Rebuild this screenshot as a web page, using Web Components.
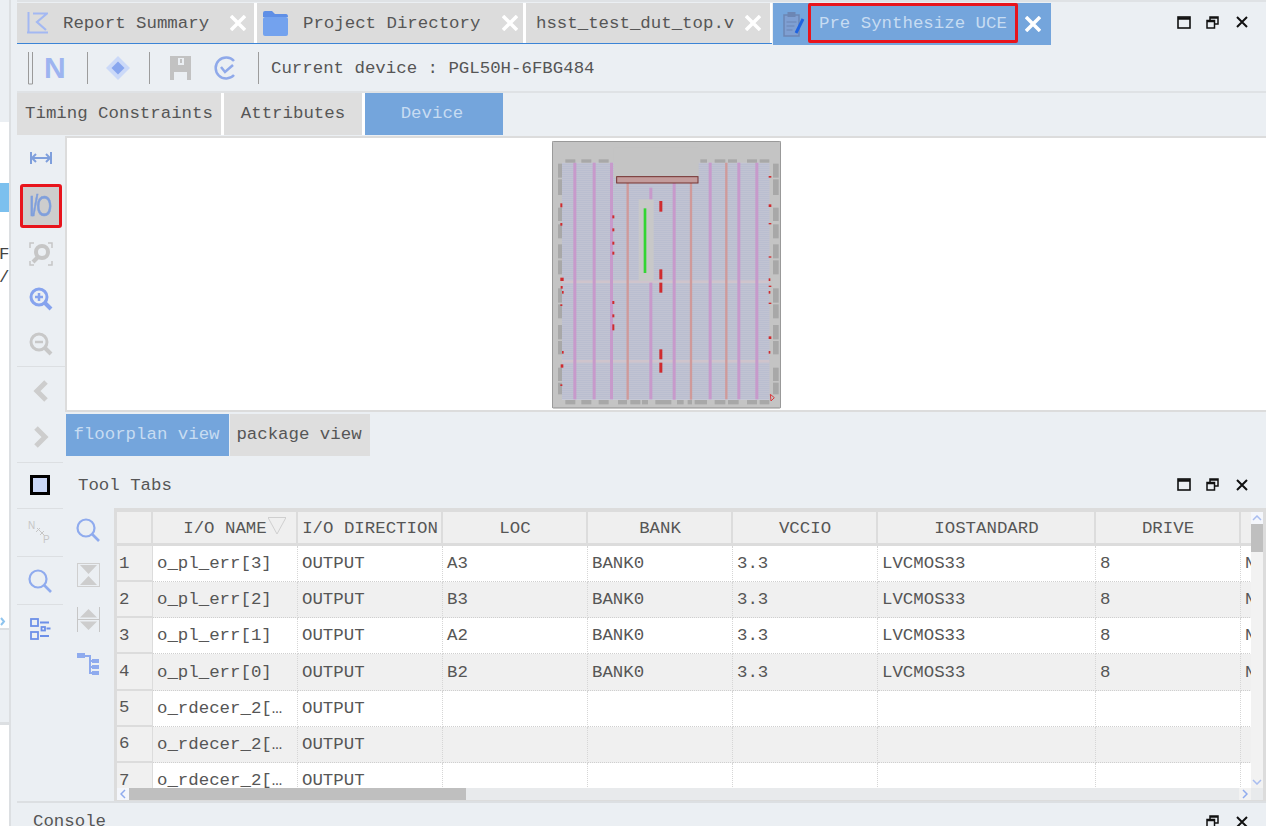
<!DOCTYPE html>
<html>
<head>
<meta charset="utf-8">
<title>Pre Synthesize UCE</title>
<style>
  html, body { margin: 0; height: 826px; overflow: hidden; background: #ebeff3; }
  body { font: 17.4px "Liberation Mono", monospace; color: #565656; display: flex; }
</style>
</head>
<body>
<left-sliver></left-sliver>
<ide-main>
  <tab-strip>
    <doc-tab icon="report" width="237" pad="10" gap="15" closer="8" text="Report Summary"></doc-tab>
    <doc-tab icon="folder" width="266" pad="6" gap="15" closer="5" text="Project Directory"></doc-tab>
    <doc-tab width="244" pad="10" gap="0" closer="9" text="hsst_test_dut_top.v"></doc-tab>
    <doc-tab icon="clip" width="278" pad="10" gap="3" closer="10" text="Pre Synthesize UCE" active marked></doc-tab>
  </tab-strip>
  <top-toolbar></top-toolbar>
  <sub-tabs></sub-tabs>
  <device-panel></device-panel>
  <panel-title></panel-title>
  <tool-panel></tool-panel>
  <console-title></console-title>
</ide-main>
<script>
const ICONS = {
  report: `<svg width="21" height="22" viewBox="0 0 21 22" fill="none" stroke="#a3b8f2" stroke-width="2"><path d="M1.500 0v21M0 20.500h21"/><path d="M6 1.500h14l-10 8.500 9 8" stroke-width="2.200"/></svg>`,
  folder: `<svg width="25" height="25" viewBox="0 0 25 25"><path d="M0 6V2q0-2 2-2h7l3 3h11q2 0 2 3z" fill="#5f8fe6"/><rect y="6" width="25" height="19" rx="2" fill="#73a2ee"/></svg>`,
  clip: `<svg width="22" height="26" viewBox="0 0 22 26" fill="none"><rect x="1" y="4" width="15" height="21" fill="#7f9fd2" stroke="#6c86b4" stroke-width="1.500"/><rect x="4.500" y="1" width="8" height="5" fill="#6c86b4"/><path d="M3.500 11h10M3.500 15h8M3.500 19h6" stroke="#6c86b4" stroke-width="1.200"/><path d="M13 22 20 8" stroke="#1f63e0" stroke-width="3"/></svg>`,
  grip: `<svg width="7" height="33" viewBox="0 0 7 33" fill="none" stroke="#9a9a9a"><path d="M1.500 0v32h4M5.500 0v32"/></svg>`,
  diamond: `<svg width="24" height="24" viewBox="0 0 24 24"><path d="M12 0 24 12 12 24 0 12z" fill="#cbd9f8"/><path d="M12 5.500 18.500 12 12 18.500 5.500 12z" fill="#88a6ee"/></svg>`,
  save: `<svg width="21" height="24" viewBox="0 0 21 24"><path d="M0 0h21v24h-4v-8H4v8H0z" fill="#c2c2c2"/><rect x="8" y="2" width="6" height="7" fill="#ebeff3"/><rect x="10" y="3" width="2" height="4" fill="#c2c2c2"/></svg>`,
  check: `<svg width="23" height="24" viewBox="0 0 23 24" fill="none" stroke="#8fa9ea" stroke-width="2.500"><path d="M20 5A10.500 10.500 0 1 0 20 19"/><path d="M7 11l4 5 8-7"/></svg>`,
  fit: `<svg width="22" height="12" viewBox="0 0 22 12" fill="none" stroke="#7f9fdc" stroke-width="2"><path d="M1 0v12M21 0v12M2 6h18"/><path d="M6 2 2 6l4 4M16 2l4 4-4 4"/></svg>`,
  fitzoom: `<svg width="24" height="24" viewBox="0 0 24 24" fill="none" stroke="#c6c6c6" stroke-width="2"><path d="M1 6V1h4M19 1h4v5M1 19v4h4M19 23h4v-4" stroke-width="1.500"/><circle cx="13" cy="10" r="6" stroke-width="4"/><path d="M9 15l-5 5" stroke-width="4"/></svg>`,
  zoomin: `<svg width="24" height="24" viewBox="0 0 24 24" fill="none" stroke="#86a3ee" stroke-width="3"><circle cx="10" cy="10" r="8"/><path d="M16 16l6 6" stroke-width="4"/><path d="M6 10h8M10 6v8" stroke-width="2.500"/></svg>`,
  zoomout: `<svg width="24" height="24" viewBox="0 0 24 24" fill="none" stroke="#c8c8c8" stroke-width="3"><circle cx="10" cy="10" r="8"/><path d="M16 16l6 6" stroke-width="4"/><path d="M6 10h8" stroke-width="2.500"/></svg>`,
  left: `<svg width="16" height="22" viewBox="0 0 16 22" fill="none" stroke="#cdcdcd" stroke-width="5"><path d="M13 2 4 11l9 9"/></svg>`,
  right: `<svg width="16" height="22" viewBox="0 0 16 22" fill="none" stroke="#cdcdcd" stroke-width="5"><path d="M3 2l9 9-9 9"/></svg>`,
  square: `<svg width="20" height="20" viewBox="0 0 20 20"><rect x="1.500" y="1.500" width="17" height="17" fill="#c9d7f7" stroke="#000" stroke-width="3"/></svg>`,
  nsp: `<svg width="25" height="25" viewBox="0 0 25 25" font-family="Liberation Sans" font-size="10" fill="#c6c6c6"><text x="0" y="9">N</text><text x="15" y="23">P</text><path d="M9 8l7 7M8 12l4-4M12 15l4-4" stroke="#c6c6c6" fill="none"/></svg>`,
  search: `<svg width="24" height="24" viewBox="0 0 24 24" fill="none" stroke="#8fabee" stroke-width="2.200"><circle cx="10" cy="10" r="8.500"/><path d="M16 16l7 7" stroke-width="2.600"/></svg>`,
  collapse: `<svg width="23" height="24" viewBox="0 0 23 24"><path d="M.5 0v24M22.500 0v24M0 .5h23M0 23.500h23" fill="none" stroke="#cfcfcf"/><path d="M3 2h17l-8.500 9zM3 22h17l-8.500-9z" fill="#cdcdcd"/></svg>`,
  expand: `<svg width="23" height="25" viewBox="0 0 23 25"><path d="M.5 0v25M22.500 0v25M1 12.500h21" stroke="#c6c6c6" fill="none"/><path d="M3 10.500 11.500 2 20 10.500zM3 14.500h17L11.500 23z" fill="#cdcdcd"/></svg>`,
  tree: `<svg width="23" height="22" viewBox="0 0 23 22"><rect y="0" width="8" height="5" fill="#8fabee"/><path d="M8 3h5v18M13 8h3M13 14h3M13 20h3" stroke="#8fabee" fill="none" stroke-width="2"/><rect x="15" y="6" width="7" height="4" fill="#8fabee"/><rect x="15" y="12" width="7" height="4" fill="#8fabee"/><rect x="15" y="18" width="7" height="4" fill="#8fabee"/></svg>`,
  tasks: `<svg width="21" height="22" viewBox="0 0 21 22" fill="none" stroke="#6d90e8" stroke-width="1.800"><rect x="1" y="1" width="7" height="7"/><rect x="1" y="14" width="7" height="7"/><rect x="11.500" y="9" width="3.500" height="3.500"/><path d="M10 4.500h9M16.500 10.500h4M10 18h9"/></svg>`,
  crossWhite: `<svg width="16" height="16" viewBox="0 0 16 16" stroke="#fff" stroke-width="3.500"><path d="M1 1l14 14M15 1 1 15"/></svg>`,
  max: `<svg width="14" height="13" viewBox="0 0 14 13" fill="none" stroke="#111" stroke-width="1.600"><rect x="1" y="1" width="12" height="11"/><path d="M1 2.500h12" stroke-width="2.500"/></svg>`,
  restore: `<svg width="13" height="13" viewBox="0 0 13 13" fill="none" stroke="#111" stroke-width="1.500"><rect x="1" y="4.500" width="7.500" height="7.500" fill="#ebeff3"/><path d="M4 4V1h8v7h-3M4 2h8M1 5.500h7.500"/></svg>`,
  cross: `<svg width="12" height="12" viewBox="0 0 12 12" stroke="#111" stroke-width="2"><path d="M1 1l10 10M11 1 1 11"/></svg>`,
  tiny: `<svg width="6" height="9" viewBox="0 0 6 9" fill="none" stroke="#8fc4ee" stroke-width="2"><path d="M1 1l3 3.500L1 8"/></svg>`,
};

class LeftSliver extends HTMLElement {
  connectedCallback() {
    this.attachShadow({ mode: "open" }).innerHTML = `
      <style>
        :host { display: flex; flex-direction: column; width: 11px; flex: none; height: 826px; box-sizing: border-box; border-right: 2px solid #dcdfe2; overflow: hidden; }
        .gap { height: 122px; background: #ebeff3; }
        .white { height: 508px; background: #fff; display: flex; flex-direction: column; border-bottom: 2px solid #dcdfe2; box-sizing: border-box; }
        .sel { margin-top: 61px; height: 29px; background: #7cc0ee; }
        .txt { margin: 31px 0 0 -1px; font-size: 17.4px; line-height: 23px; color: #444; white-space: pre; }
        .white svg { margin-top: auto; margin-bottom: 2px; }
        .mid { height: 95px; background: #ebeff3; border-bottom: 3px solid #dcdfe2; box-sizing: border-box; }
        .rest { flex: 1; background: #fff; }
        svg { display: block; }
      </style>
      <div class="gap"></div>
      <div class="white"><div class="sel"></div><div class="txt">F
/</div>${ICONS.tiny}</div>
      <div class="mid"></div>
      <div class="rest"></div>`;
  }
}

class IdeMain extends HTMLElement {
  connectedCallback() {
    this.attachShadow({ mode: "open" }).innerHTML = `
      <style>
        :host { display: flex; flex-direction: column; flex: 1; min-width: 0; height: 826px; padding-left: 6px; }
      </style>
      <slot></slot>`;
  }
}

class WinButtons extends HTMLElement {
  connectedCallback() {
    const noMax = this.hasAttribute("nomax");
    this.attachShadow({ mode: "open" }).innerHTML = `
      <style>
        :host { display: flex; align-items: center; margin-left: auto; margin-right: 10px; width: 87px; flex: none; }
        span { width: 29px; display: flex; justify-content: center; }
        svg { display: block; }
      </style>
      <span>${noMax ? "" : ICONS.max}</span><span>${ICONS.restore}</span><span>${ICONS.cross}</span>`;
  }
}

class TabStrip extends HTMLElement {
  connectedCallback() {
    this.attachShadow({ mode: "open" }).innerHTML = `
      <style>
        :host { display: flex; height: 45px; flex: none; box-sizing: border-box; padding-top: 1px; border-top: 2px solid #dfe2e5; }
        .tabs { display: flex; gap: 3px; align-items: flex-start; background: linear-gradient(#fff 40px, #3b84d6 40px, #3b84d6 41px, transparent 41px) 0 0 / 755px 100% no-repeat; }
      </style>
      <div class="tabs"><slot></slot></div>
      <win-buttons style="margin-top:-4px"></win-buttons>`;
  }
}

class DocTab extends HTMLElement {
  connectedCallback() {
    const active = this.hasAttribute("active");
    const marked = this.hasAttribute("marked");
    const icon = this.getAttribute("icon");
    const text = this.getAttribute("text");
    this.attachShadow({ mode: "open" }).innerHTML = `
      <style>
        :host {
          display: flex; align-items: center; flex: none; box-sizing: border-box;
          width: ${this.getAttribute("width")}px; height: ${active ? 42 : 40}px;
          padding-left: ${this.getAttribute("pad")}px; gap: ${this.getAttribute("gap")}px;
          background: ${active ? "#74a5dc" : "#dcdcdc"};
          color: ${active ? "#c7dcf2" : "#565656"}; white-space: nowrap;
        }
        .label { margin-top: 1px; }
        svg { display: block; flex: none; }
        .label.marked { border: 3px solid #e8141c; border-radius: 2px; height: 40px; box-sizing: border-box; padding: 0 0 0 8px; margin-top: -3px; line-height: 36px; width: 210px; flex: none; }
        .x { margin-left: auto; margin-right: ${this.getAttribute("closer")}px; display: flex; }
      </style>
      ${icon ? ICONS[icon] : ""}
      <span class="label ${marked ? "marked" : ""}">${text}</span>
      <span class="x">${ICONS.crossWhite}</span>`;
  }
}

class TopToolbar extends HTMLElement {
  connectedCallback() {
    this.attachShadow({ mode: "open" }).innerHTML = `
      <style>
        :host { display: flex; align-items: center; height: 48px; flex: none; box-sizing: border-box; border-bottom: 2px solid #dfe2e5; padding-left: 10px; }
        i { display: block; width: 1px; height: 32px; background: #9c9c9c; flex: none; }
        svg { display: block; flex: none; }
        b { font: bold 30px "Liberation Sans", sans-serif; color: #9db4f0; width: 22px; margin-left: 10px; line-height: 32px; flex: none; }
        .t { margin-left: 12px; white-space: nowrap; }
      </style>
      ${ICONS.grip}
      <b>N</b>
      <i style="margin-left:21px"></i>
      <span style="margin-left:18px;display:flex">${ICONS.diamond}</span>
      <i style="margin-left:19px"></i>
      <span style="margin-left:20px;display:flex">${ICONS.save}</span>
      <span style="margin-left:23px;display:flex">${ICONS.check}</span>
      <i style="margin-left:21px"></i>
      <span class="t">Current device : PGL50H-6FBG484</span>`;
  }
}

class FlatTab extends HTMLElement {
  connectedCallback() {
    const active = this.hasAttribute("active");
    const nudge = this.getAttribute("nudge") || 2;
    this.attachShadow({ mode: "open" }).innerHTML = `
      <style>
        :host {
          display: flex; align-items: center; justify-content: center; flex: none; box-sizing: border-box;
          width: ${this.getAttribute("width")}px; height: 42px; padding: 0 ${nudge}px 2px 0;
          background: ${active ? "#74a5dc" : "#dedede"};
          color: ${active ? "#c7dcf2" : "#565656"}; white-space: nowrap;
        }
      </style>
      <slot></slot>`;
  }
}

class SubTabs extends HTMLElement {
  connectedCallback() {
    this.attachShadow({ mode: "open" }).innerHTML = `
      <style>
        :host { display: flex; gap: 3px; height: 42px; flex: none; }
        .s { width: 3px; background: #fff; margin: 0 -3px; flex: none; }
      </style>
      <flat-tab width="204" nudge="0">Timing Constraints</flat-tab><span class="s"></span>
      <flat-tab width="138" nudge="0">Attributes</flat-tab><span class="s"></span>
      <flat-tab width="138" nudge="4" active>Device</flat-tab>`;
  }
}

class IconCell extends HTMLElement {
  connectedCallback() {
    const name = this.getAttribute("name");
    this.attachShadow({ mode: "open" }).innerHTML = `
      <style>
        :host { display: flex; align-items: center; justify-content: center; flex: none; width: 48px; height: ${this.getAttribute("h")}px; box-sizing: border-box; }
        :host([sep]) { border-bottom: 1px solid #dcdfe2; }
        svg { display: block; }
      </style>
      ${name ? ICONS[name] : "<slot></slot>"}`;
  }
}

class IoToggle extends HTMLElement {
  connectedCallback() {
    this.attachShadow({ mode: "open" }).innerHTML = `
      <style>
        :host { display: flex; align-items: center; justify-content: center; width: 42px; height: 44px; box-sizing: border-box; border: 3px solid #e8141c; border-radius: 3px; }
        div { display: flex; align-items: center; justify-content: center; width: 36px; height: 38px; background: #cdcdcd; }
        span { display: block; font: 30px "Liberation Sans", sans-serif; letter-spacing: -3px; color: #7f9fdc; -webkit-text-stroke: .6px #7f9fdc; transform: scaleX(.68); white-space: nowrap; margin-left: -3px; }
      </style>
      <div><span>I/O</span></div>`;
  }
}

class FloorplanCanvas extends HTMLElement {
  connectedCallback() {
    // coordinates are in a 3x grid of the chip drawing
    const rects = (list, fill) => list.map(r => `<rect x="${r[0]}" y="${r[1]}" width="${r[2]}" height="${r[3]}" fill="${fill}"/>`).join("");
    const pads = [];
    [[60,30],[108,30],[160,30],[465,20],[508,32],[548,27],[605,30],[643,29]].forEach(p => pads.push([p[0], 75, p[1], 10]));
    [[60,30],[108,30],[160,30],[218,27],[255,30],[290,18],[330,48],[395,20],[427,13],[448,37],[508,32],[548,32],[605,30],[643,29]].forEach(p => pads.push([p[0], 797, p[1], 13]));
    const ys = [[88,42],[135,47],[220,40],[270,42],[330,42],[378,42],[462,43],[510,42],[572,43],[620,40],[700,40],[745,35]];
    ys.forEach(p => { pads.push([38, p[0], 12, p[1]]); pads.push([683, p[0], 17, p[1]]); });
    let lines = "";
    for (let y = 88; y < 795; y += 6) lines += `<rect x="50" y="${y}" width="622" height="3" fill="#b4b8cc"/>`;
    const pink = [88,146,198,494,580,634].map(x => [x - 4, 85, 9, 710]).concat([[312,160,9,35],[312,445,9,350],[382,146,9,650]]);
    const salmon = [[243.5,146,7,650],[433.500,146,7,650],[539.500,85,7,710]];
    const red = [[342,200,9,32],[342,405,9,30],[342,445,9,30],[342,645,9,30],[342,685,9,30],[201,243,6,9],[201,282,6,9],[201,322,6,9],[201,352,6,9],[201,500,6,9],[201,540,6,9],[201,570,6,18],
      [45,207,6,12],[45,266,6,8],[45,430,10,10],[46,455,6,8],[50,470,5,8],[45,510,6,5],[50,650,5,8],[46,690,8,10],[45,750,6,5],
      [670,125,8,5],[670,210,8,8],[670,266,8,4],[670,366,8,4],[670,432,5,8],[670,454,8,4],[670,470,5,8],[670,505,8,4],[670,606,8,8],[670,650,5,8]];
    this.attachShadow({ mode: "open" }).innerHTML = `
      <style>
        :host { display: flex; justify-content: center; align-items: flex-start; box-sizing: border-box; height: 276px; background: #fff; border: 2px solid #dcdcdc; border-right: 0; padding-top: 3px; }
        svg { display: block; margin-left: -1px; filter: blur(.35px); }
      </style>
      <svg width="229" height="268" viewBox="20 20 687 804">
        <rect x="21" y="21" width="685" height="800" fill="#c4c4c4" stroke="#8f8f8f" stroke-width="3" rx="3"/>
        <rect x="50" y="85" width="622" height="712" fill="#c8cad6"/>
        ${lines}
        <rect x="50" y="438" width="622" height="8" fill="#cfc4cc"/>
        <rect x="50" y="677" width="622" height="8" fill="#cfc4cc"/>
        <rect x="205" y="40" width="255" height="90" fill="#c4c4c4"/>
        <rect x="280" y="195" width="45" height="245" fill="#c8c8c8"/>
        ${rects(pink, "#c79acb")}
        ${rects(salmon, "#cf9a9a")}
        ${rects(pads, "#a8a8a8")}
        ${rects(red, "#cf2b2f")}
        <rect x="214" y="127" width="244" height="19" fill="#c39c9c" stroke="#74302f" stroke-width="3"/>
        <rect x="295" y="222" width="8" height="194" fill="#33d633"/>
        <path d="M675 780l12 10-10 10z" fill="none" stroke="#d8383c" stroke-width="3"/>
      </svg>`;
  }
}

class DevicePanel extends HTMLElement {
  connectedCallback() {
    this.attachShadow({ mode: "open" }).innerHTML = `
      <style>
        :host { display: flex; height: 328px; flex: none; box-sizing: border-box; }
        .tools { display: flex; flex-direction: column; width: 46px; margin-right: 2px; flex: none; border-bottom: 1px solid #dcdfe2; box-sizing: border-box; }
        .view { flex: 1; min-width: 0; display: flex; flex-direction: column; padding-top: 1px; }
        .tabs { display: flex; gap: 1px; margin: 2px 0 0 1px; }
        icon-cell { margin-right: -2px; }
      </style>
      <div class="tools">
        <icon-cell name="fit" h="46"></icon-cell>
        <icon-cell h="50"><io-toggle></io-toggle></icon-cell>
        <icon-cell name="fitzoom" h="46"></icon-cell>
        <icon-cell name="zoomin" h="44"></icon-cell>
        <icon-cell name="zoomout" h="46" sep></icon-cell>
        <icon-cell name="left" h="48"></icon-cell>
        <icon-cell name="right" h="44"></icon-cell>
      </div>
      <div class="view">
        <floorplan-canvas></floorplan-canvas>
        <div class="tabs">
          <flat-tab width="163" active>floorplan view</flat-tab>
          <flat-tab width="140">package view</flat-tab>
        </div>
      </div>`;
  }
}

class PanelTitle extends HTMLElement {
  connectedCallback() {
    this.attachShadow({ mode: "open" }).innerHTML = `
      <style>
        :host { display: flex; align-items: center; height: 45px; flex: none; box-sizing: border-box; }
        .sq { width: 48px; display: flex; justify-content: center; margin: -2px -1px 0 -1px; }
        .t { margin-left: 15px; }
        win-buttons { margin-top: -2px; }
        svg { display: block; }
      </style>
      <span class="sq">${ICONS.square}</span><span class="t">Tool Tabs</span>
      <win-buttons></win-buttons>`;
  }
}

class IoTable extends HTMLElement {
  connectedCallback() {
    const cols = ["I/O NAME", "I/O DIRECTION", "LOC", "BANK", "VCCIO", "IOSTANDARD", "DRIVE", ""];
    const rows = [
      ["o_pl_err[3]", "OUTPUT", "A3", "BANK0", "3.3", "LVCMOS33", "8", "N"],
      ["o_pl_err[2]", "OUTPUT", "B3", "BANK0", "3.3", "LVCMOS33", "8", "N"],
      ["o_pl_err[1]", "OUTPUT", "A2", "BANK0", "3.3", "LVCMOS33", "8", "N"],
      ["o_pl_err[0]", "OUTPUT", "B2", "BANK0", "3.3", "LVCMOS33", "8", "N"],
      ["o_rdecer_2[…", "OUTPUT", "", "", "", "", "", ""],
      ["o_rdecer_2[…", "OUTPUT", "", "", "", "", "", ""],
      ["o_rdecer_2[…", "OUTPUT", "", "", "", "", "", ""],
    ];
    const head = cols.map((c, i) => `<div class="h">${c}${i === 0 ? `<svg class="sort" width="18" height="18" viewBox="0 0 18 18" fill="none" stroke="#cfcfcf"><path d="M0 .5h18L9 17z"/></svg>` : ""}</div>`).join("");
    const body = rows.map((r, i) => `<div class="n">${i + 1}</div>` + r.map(v => `<div class="c ${i % 2 ? "alt" : ""}">${v}</div>`).join("")).join("");
    this.attachShadow({ mode: "open" }).innerHTML = `
      <style>
        :host { display: grid; grid-template-columns: 1fr 12px; grid-template-rows: 276px 12px; flex: 1; min-width: 0; box-sizing: border-box; height: 293px; border: 3px solid #dcdcdc; border-width: 4px 3px 1px 3px; background: #f0f0f0; }
        .view { overflow: hidden; background: #f0f0f0; }
        .grid { display: grid; grid-template-columns: 36px 145px 145px 145px 145px 145px 218px 145px 145px; grid-auto-rows: 36.17px; grid-template-rows: 34px; width: 1300px; }
        .h, .corner { background: #efefef; border-right: 2px solid #dcdcdc; border-bottom: 3px solid #dcdcdc; display: flex; align-items: center; justify-content: center; box-sizing: border-box; position: relative; white-space: nowrap; padding: 2px 0 0 1px; }
        .sort { position: absolute; left: 115px; top: 5px; }
        .n { background: #f0f0f0; border-bottom: 2px solid #dcdcdc; border-right: 1px solid #dcdcdc; display: flex; align-items: center; padding-left: 2px; box-sizing: border-box; }
        .c { background: #fff; border-right: 1px dotted #d6d6d6; border-bottom: 1px dotted #cfcfcf; display: flex; align-items: center; padding-left: 4px; box-sizing: border-box; white-space: nowrap; overflow: hidden; }
        .c.alt { background: #f0f0f0; }
        .vbar { display: flex; flex-direction: column; align-items: center; background: #f2f2f2; }
        .hbar { display: flex; align-items: center; background: #e8eaec; }
        .arrow { width: 12px; height: 12px; flex: none; display: flex; align-items: center; justify-content: center; background: #f4f6fb; }
        .thumbh { width: 337px; height: 12px; background: #bfbfbf; }
        .thumbv { width: 12px; height: 28px; background: #bfbfbf; }
        svg { display: block; }
      </style>
      <div class="view"><div class="grid"><div class="corner"></div>${head}${body}</div></div>
      <div class="vbar">
        <span class="arrow"><svg width="10" height="6" viewBox="0 0 10 6" fill="none" stroke="#a9bdf0" stroke-width="1.500"><path d="M1 5l4-4 4 4"/></svg></span>
        <div class="thumbv"></div>
        <span class="arrow" style="margin-top:auto;background:#f2f2f2"><svg width="10" height="6" viewBox="0 0 10 6" fill="none" stroke="#a9bdf0" stroke-width="1.500"><path d="M1 1l4 4 4-4"/></svg></span>
      </div>
      <div class="hbar">
        <span class="arrow"><svg width="6" height="10" viewBox="0 0 6 10" fill="none" stroke="#8fabee" stroke-width="1.500"><path d="M5 1 1 5l4 4"/></svg></span>
        <div class="thumbh"></div>
        <span class="arrow" style="margin-left:auto;background:#f2f2f2"><svg width="6" height="10" viewBox="0 0 6 10" fill="none" stroke="#8fabee" stroke-width="1.500"><path d="M1 1l4 4-4 4"/></svg></span>
      </div>
      <div style="background:#e8eaec"></div>`;
  }
}

class ToolPanel extends HTMLElement {
  connectedCallback() {
    this.attachShadow({ mode: "open" }).innerHTML = `
      <style>
        :host { display: flex; height: 295px; flex: none; box-sizing: border-box; border-bottom: 2px solid #dcdfe2; }
        .col1 { width: 46px; margin-right: 2px; flex: none; border-top: 1px solid #dcdfe2; display: flex; flex-direction: column; box-sizing: border-box; height: 145px; }
        .col1 icon-cell { width: 46px; }
        .col2 { width: 49px; flex: none; display: flex; flex-direction: column; align-items: center; padding: 10px 3px 0 0; box-sizing: border-box; }
        .col2 span { display: flex; flex: none; }
        svg { display: block; }
      </style>
      <div class="col1">
        <icon-cell name="nsp" h="48" sep></icon-cell>
        <icon-cell name="search" h="48" sep></icon-cell>
        <icon-cell name="tasks" h="48"></icon-cell>
      </div>
      <div class="col2">
        <span>${ICONS.search}</span>
        <span style="margin-top:21px">${ICONS.collapse}</span>
        <span style="margin-top:20px">${ICONS.expand}</span>
        <span style="margin-top:21px">${ICONS.tree}</span>
      </div>
      <io-table></io-table>`;
  }
}

class ConsoleTitle extends HTMLElement {
  connectedCallback() {
    this.attachShadow({ mode: "open" }).innerHTML = `
      <style>
        :host { display: flex; align-items: flex-start; height: 24px; flex: none; box-sizing: border-box; padding-left: 16px; padding-top: 9px; line-height: 20px; }
        win-buttons { margin-top: 3px; }
      </style>
      <span>Console</span>
      <win-buttons nomax></win-buttons>`;
  }
}

customElements.define("left-sliver", LeftSliver);
customElements.define("ide-main", IdeMain);
customElements.define("win-buttons", WinButtons);
customElements.define("tab-strip", TabStrip);
customElements.define("doc-tab", DocTab);
customElements.define("top-toolbar", TopToolbar);
customElements.define("flat-tab", FlatTab);
customElements.define("sub-tabs", SubTabs);
customElements.define("icon-cell", IconCell);
customElements.define("io-toggle", IoToggle);
customElements.define("floorplan-canvas", FloorplanCanvas);
customElements.define("device-panel", DevicePanel);
customElements.define("panel-title", PanelTitle);
customElements.define("io-table", IoTable);
customElements.define("tool-panel", ToolPanel);
customElements.define("console-title", ConsoleTitle);
</script>
</body>
</html>
